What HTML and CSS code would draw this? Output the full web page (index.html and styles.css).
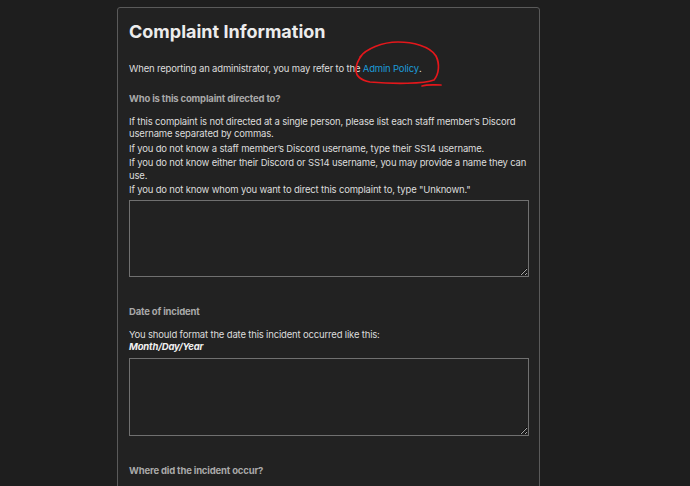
FILE: index.html
```html
<!DOCTYPE html>
<html lang="en">

<head>
    <meta charset="UTF-8">
    <meta name="viewport" content="width=device-width, initial-scale=1.0">
    <title>Complaint Information</title>
    <link rel="stylesheet" href="styles.css">
</head>

<body>
    <div class="card">
        <h1>Complaint Information</h1>

        <p class="intro">When reporting an administrator, you may refer to the
            <span class="marked"><a href="#">Admin Policy</a><svg class="scribble" viewBox="0 0 90 50" width="90" height="50">
                <path d="M6 17 C12 9 28 2 44 2 C58 2 76 6 82 16 C86 24 85 34 80 40 C70 44 40 44 16 42 C6 40 2 36 2 30 C2 24 4 20 8 15"
                    fill="none" stroke="#e3171b" stroke-width="1.7" stroke-linecap="round" />
                <path d="M68 46 C74 44 80 45 87 45" fill="none" stroke="#e3171b" stroke-width="1.7" stroke-linecap="round" />
            </svg></span>.
        </p>

        <div class="field">
            <label for="target">Who is this complaint directed to?</label>
            <p>If this complaint is not directed at a single person, please list each staff member’s Discord username
                separated by commas.</p>
            <p>If you do not know a staff member’s Discord username, type their SS14 username.</p>
            <p>If you do not know either their Discord or SS14 username, you may provide a name they can use.</p>
            <p>If you do not know whom you want to direct this complaint to, type "Unknown."</p>
            <textarea id="target" rows="5"></textarea>
        </div>

        <div class="field">
            <label for="date">Date of incident</label>
            <p>You should format the date this incident occurred like this:<br><em>Month/Day/Year</em></p>
            <textarea id="date" class="tall" rows="5"></textarea>
        </div>

        <div class="field">
            <label for="place">Where did the incident occur?</label>
            <textarea id="place" rows="5"></textarea>
        </div>
    </div>
</body>

</html>
```

FILE: styles.css
```css
body {
    margin: 0;
    padding: 7px 0 0 117px;
    background-color: #1e1e1e;
    color: #dcdcdc;
    font-family: Inter, "Noto Sans", sans-serif;
    font-size: 9.5px;
    letter-spacing: -0.17px;
}

.card {
    width: 399px;
    padding: 6px 11px 20px;
    background-color: #222222;
    border: 1px solid #5a5a5a;
    border-radius: 3px;
}

h1 {
    margin: 7px 0 21px;
    font-size: 18px;
    font-weight: 700;
    letter-spacing: 0;
    color: #ececec;
}

p {
    margin: 0 0 2px;
    line-height: 12.5px;
}

p em {
    font-weight: 700;
    color: #f0f0f0;
}

.intro {
    margin-bottom: 17px;
}

.marked {
    position: relative;
}

.marked a {
    color: #1d9bd8;
    text-decoration: none;
}

/* hand-drawn ring around the policy link */
.scribble {
    position: absolute;
    left: -9px;
    top: -23px;
}

.field {
    margin-bottom: 29px;
}

.field label {
    display: block;
    margin-bottom: 12px;
    font-weight: 700;
    color: #a9a9a9;
}

textarea {
    display: block;
    box-sizing: border-box;
    width: 400px;
    height: 77px;
    margin-top: 3px;
    background-color: transparent;
    border: 1px solid #707070;
    color: #dcdcdc;
    color-scheme: dark;
}

textarea.tall {
    height: 78px;
    margin-top: 4px;
}
```
